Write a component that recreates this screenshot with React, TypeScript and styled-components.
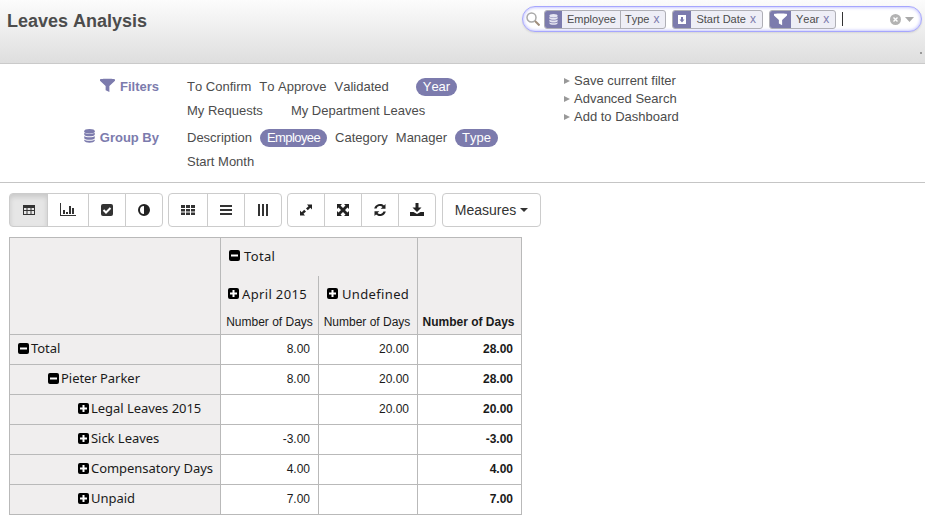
import React from "react";
import styled, { createGlobalStyle } from "styled-components";

const Global = createGlobalStyle`
  html, body { margin: 0; padding: 0; background: #fff; }
  body { font-family: "Liberation Sans", Arial, sans-serif; font-size: 13px; color: #4c4c4c; width: 925px; height: 520px; overflow: hidden; font-kerning: none; }
`;

const Page = styled.div`width: 925px; height: 520px; overflow: hidden;`;

const Header = styled.header`
  height: 64px;
  box-sizing: border-box;
  background: linear-gradient(#fcfcfc, #dedede);
  border-bottom: 1px solid #cacaca;
  display: flex;
  justify-content: space-between;
  padding: 6px 3px 0 7px;
  position: relative;
`;
const Title = styled.h1`
  margin: 3px 0 0;
  font-size: 18px;
  line-height: 24px;
  font-weight: bold;
  color: #4c4c4c;
`;
const SearchBox = styled.div`
  width: 400px;
  height: 26px;
  box-sizing: border-box;
  background: #fff;
  border: 1px solid #a6a6fe;
  border-radius: 13px;
  box-shadow: 0 0 3px 1px rgba(166, 166, 254, .6) inset, 0 1px 2px rgba(0,0,0,.1);
  display: flex;
  align-items: center;
  padding: 0 7px 0 3px;
`;
const SearchIcon = styled.svg`width: 14px; height: 14px; margin-right: 4px; flex: none;`;
const Facet = styled.div`
  height: 19px;
  box-sizing: border-box;
  display: flex;
  align-items: stretch;
  border: 1px solid #afafb6;
  border-radius: 3px;
  margin-right: 6px;
  background: #eeeef6;
  font-size: 11px;
  line-height: 17px;
  color: #4c4c4c;
`;
const FacetIcon = styled.span<{ $w: number }>`
  width: ${p => p.$w}px;
  background: #7c7bad;
  display: flex;
  align-items: center;
  justify-content: center;
  border-radius: 2px 0 0 2px;
`;
const FacetVal = styled.span<{ $div?: boolean }>`
  padding: 0 4px 0 ${p => p.$div ? 4 : 5}px;
  ${p => p.$div ? "border-left: 1px solid #afafb6;" : ""}
`;
const FacetX = styled.span`
  color: #7c7bad;
  margin: 0 6px 0 0;
  font-size: 12px;
`;
const Caret = styled.span`
  width: 1px;
  height: 14px;
  background: #333;
`;
const SearchEnd = styled.div`
  margin-left: auto;
  display: flex;
  align-items: center;
  gap: 4px;
`;
const Grip = styled.span`
  position: absolute;
  right: 3px;
  bottom: 9px;
  width: 2px;
  height: 2px;
  background: #999;
`;

const Drawer = styled.section`
  height: 119px;
  box-sizing: border-box;
  border-bottom: 1px solid #c5c5c5;
  display: flex;
  padding-top: 11px;
`;
const Groups = styled.div`
  width: 564px;
  flex: none;
  display: flex;
  flex-direction: column;
  gap: 3px;
`;
const Group = styled.div`display: flex;`;
const GroupLabel = styled.div`
  width: 159px;
  margin-right: 28px;
  flex: none;
  display: flex;
  justify-content: flex-end;
  align-items: flex-start;
  height: 24px;
  line-height: 24px;
  font-weight: bold;
  color: #7c7bad;
  gap: 5px;
  svg { flex: none; margin-top: 3px; }
`;
const Rows = styled.div`display: flex; flex-direction: column;`;
const Row = styled.div`display: flex; gap: 8px; height: 24px; align-items: center;`;
const Item = styled.span<{ $on?: boolean; $sep?: number; $tight?: boolean }>`
  height: 18px;
  line-height: 18px;
  margin-left: ${p => p.$sep ?? 0}px;
  ${p => p.$on ? "background: #7c7bad; color: #fff; padding: 0 7px; border-radius: 9px;" : ""}
  ${p => p.$tight ? "letter-spacing: -.6px;" : ""}
`;
const Links = styled.ul`
  list-style: none;
  margin: 0;
  padding: 0;
  position: relative;
  top: -3px;
`;
const LinkRow = styled.li`
  height: 18px;
  line-height: 18px;
  display: flex;
  align-items: center;
  gap: 4px;
  &::before {
    content: "";
    width: 0; height: 0;
    border-left: 6px solid #999;
    border-top: 3px solid transparent;
    border-bottom: 3px solid transparent;
  }
`;

const Toolbar = styled.div`
  display: flex;
  gap: 5px;
  padding: 10px 0 0 9px;
`;
const BtnGroup = styled.div`display: flex;`;
const Btn = styled.button<{ $w: number; $active?: boolean }>`
  width: ${p => p.$w}px;
  height: 34px;
  box-sizing: border-box;
  padding: 0;
  margin-left: -1px;
  background: ${p => p.$active ? "#e6e6e6" : "#fff"};
  border: 1px solid #ccc;
  ${p => p.$active ? "box-shadow: inset 0 3px 5px rgba(0,0,0,.125);" : ""}
  display: flex;
  align-items: center;
  justify-content: center;
  color: #333;
  &:first-child { margin-left: 0; border-radius: 4px 0 0 4px; }
  &:last-child { border-radius: 0 4px 4px 0; }
`;
const MeasuresBtn = styled.button`
  width: 99px;
  height: 34px;
  margin-left: 1px;
  box-sizing: border-box;
  padding: 0;
  background: #fff;
  border: 1px solid #ccc;
  border-radius: 4px;
  color: #333;
  font: 14px "Liberation Sans", Arial, sans-serif;
  display: flex;
  align-items: center;
  justify-content: center;
  gap: 4px;
  &::after {
    content: "";
    width: 0; height: 0;
    border-top: 4px solid #333;
    border-left: 4px solid transparent;
    border-right: 4px solid transparent;
  }
`;

const Pivot = styled.table`
  margin: 10px 0 0 9px;
  border-collapse: collapse;
  table-layout: fixed;
  width: 513px;
  font-size: 12px;
  color: #1a1a1a;
  col:nth-child(1) { width: 211px; }
  col:nth-child(2) { width: 98px; }
  col:nth-child(3) { width: 99px; }
  col:nth-child(4) { width: 104px; }
`;
const Th = styled.th<{ $noTop?: boolean; $noBottom?: boolean }>`
  background: #f0eeee;
  border: 1px solid #b9b9b9;
  ${p => p.$noTop ? "border-top: none;" : ""}
  ${p => p.$noBottom ? "border-bottom: none;" : ""}
  font-weight: normal;
  padding: 0;
  text-align: left;
  vertical-align: middle;
`;
const HeadLabel = styled.div<{ $shift: number; $left: number; $gap: number }>`
  display: flex;
  align-items: center;
  gap: ${p => p.$gap}px;
  font: 13px "Noto Sans", "Open Sans", sans-serif;
  letter-spacing: .35px;
  padding-left: ${p => p.$left}px;
  color: #1a1a1a;
  ${p => p.$shift > 0 ? `padding-top: ${p.$shift}px;` : `padding-bottom: ${-p.$shift}px;`}
`;
const Measure = styled.div<{ $bold?: boolean; $nudge?: boolean }>`
  font: ${p => p.$bold ? "bold " : ""}12px "Liberation Sans", Arial, sans-serif;
  text-align: center;
  white-space: nowrap;
  line-height: 24px;
  padding-top: 2px;
  ${p => p.$nudge ? "padding-right: 2px;" : ""}
`;
const RowHead = styled.th<{ $indent: number }>`
  background: #f0eeee;
  border: 1px solid #b9b9b9;
  font: 13px/27px "Noto Sans", "Open Sans", sans-serif;
  letter-spacing: -.04px;
  text-align: left;
  padding: 0 0 2px ${p => p.$indent}px;
  height: 27px;
  color: #1a1a1a;
`;
const RowLabel = styled.div`display: flex; align-items: center; gap: 2px; white-space: nowrap;`;
const Td = styled.td<{ $bold?: boolean }>`
  border: 1px solid #b9b9b9;
  text-align: right;
  padding: 0 8px 0 0;
  height: 29px;
  font-size: 12px;
  font-weight: ${p => p.$bold ? "bold" : "normal"};
  color: #1a1a1a;
`;

const Toggle = ({ minus }: { minus?: boolean }) => (
  <svg width="11" height="11" viewBox="0 0 11 11" style={{ flex: "none" }}>
    <rect width="11" height="11" rx="2" fill="#000" />
    {minus ? <rect x="2" y="4.500" width="7" height="2" fill="#fff" /> : <path d="M4.500 2h2v2.500H9v2H6.500V9h-2V6.500H2v-2h2.500z" fill="#fff" />}
  </svg>
);

const FunnelIcon = ({ c, s }: { c: string; s: number }) => (
  <svg width={s} height={s} viewBox="0 0 16 16"><path d="M0 1.500C0 .5 16 .5 16 1.500V3L10 8.500V15L6 13V8.500L0 3Z" fill={c} /></svg>
);
const DbIcon = ({ c, w, h }: { c: string; w: number; h: number }) => (
  <svg width={w} height={h} viewBox="0 0 12 16">
    <ellipse cx="6" cy="2.500" rx="6" ry="2.500" fill={c} />
    <path d="M0 4c1 2 11 2 12 0v2.500C11 9 1 9 0 6.500ZM0 8c1 2 11 2 12 0v2.500c-1 2.500-11 2.500-12 0ZM0 12c1 2 11 2 12 0v1.500c-1 3-11 3-12 0Z" fill={c} />
  </svg>
);

const I = { width: 14, height: 14, viewBox: "0 0 14 14" };
const TableI = () => <svg {...I}><path fillRule="evenodd" d="M1 2h12v10H1zM2 5v2h2.500V5zm3.500 0v2h3V5zm4 0v2H12V5zM2 8v3h2.500V8zm3.500 0v3h3V8zm4 0v3H12V8z" fill="#333" /></svg>;
const ChartI = () => <svg width="16" height="14" viewBox="0 0 16 14"><path d="M0 0h1v12h15v1H0zM3 7h2v4H3zM6 9h2v2H6zM9 3h2v8H9zM12 5h2v6h-2z" fill="#333" /></svg>;
const CheckI = () => <svg {...I}><rect x="1" y="1" width="12" height="12" rx="2" fill="#333" /><path d="M3.500 7l2.500 2.500L10.500 5" stroke="#fff" strokeWidth="2" fill="none" /></svg>;
const HalfI = () => <svg {...I}><circle cx="7" cy="7" r="5" fill="#fff" stroke="#222" strokeWidth="2" /><path d="M7 2a5 5 0 0 1 0 10z" fill="#222" /></svg>;
const GridI = () => <svg {...I}><path d="M0 2h4v3H0zM5 2h4v3H5zM10 2h4v3h-4zM0 6h4v2.500H0zM5 6h4v2.500H5zM10 6h4v2.500h-4zM0 9.500h4V12H0zM5 9.500h4V12H5zM10 9.500h4V12h-4z" fill="#333" /></svg>;
const LinesI = () => <svg {...I}><path d="M1 2h12v2H1zM1 6h12v2H1zM1 10h12v2H1z" fill="#333" /></svg>;
const ColsI = () => <svg {...I}><path d="M2 1h2v12H2zM6 1h2v12H6zM10 1h2v12h-2z" fill="#333" /></svg>;
const ExpandI = () => <svg {...I}><path d="M8 1.500h5v5L11.300 4.800 8.800 7.300 7 5.500 9.500 3.200zM6 12.500H1v-5L2.700 9.200 5.200 6.700 7 8.500 4.500 10.800z" fill="#222" /></svg>;
const FullI = () => <svg {...I}><path d="M1 1h5L4.500 2.500 7 5l2.500-2.500L8 1h5v5l-1.500-1.500L9 7l2.500 2.500L13 8v5H8l1.500-1.500L7 9l-2.500 2.500L6 13H1V8l1.500 1.500L5 7 2.500 4.500 1 6z" fill="#222" /></svg>;
const RefreshI = () => <svg {...I}><path d="M12.500 1v4.800H7.700l1.800-1.800A3.600 3.600 0 0 0 3.600 5.500H1.200A6 6 0 0 1 11 2.500zM1.500 13V8.200h4.800L4.500 10a3.600 3.600 0 0 0 5.900-1.500h2.400A6 6 0 0 1 3 11.500z" fill="#222" /></svg>;
const DownloadI = () => <svg {...I}><path d="M5.500 0h3v4.500h3L7 9 2.500 4.500h3zM0 9h3.500L7 11l3.500-2H14v4H0z" fill="#222" /></svg>;

type R = { label: string; indent: number; minus?: boolean; a: string; b: string; t: string };
const rows: R[] = [
  { label: "Total", indent: 8, minus: true, a: "8.00", b: "20.00", t: "28.00" },
  { label: "Pieter Parker", indent: 38, minus: true, a: "8.00", b: "20.00", t: "28.00" },
  { label: "Legal Leaves 2015", indent: 68, a: "", b: "20.00", t: "20.00" },
  { label: "Sick Leaves", indent: 68, a: "-3.00", b: "", t: "-3.00" },
  { label: "Compensatory Days", indent: 68, a: "4.00", b: "", t: "4.00" },
  { label: "Unpaid", indent: 68, a: "7.00", b: "", t: "7.00" },
];

export default function App() {
  return (
    <Page>
      <Global />
      <Header>
        <Title>Leaves Analysis</Title>
        <SearchBox>
          <SearchIcon viewBox="0 0 14 14"><circle cx="5.500" cy="5.500" r="4.500" fill="none" stroke="#a9a9a9" strokeWidth="1.500" /><path d="M9 9l4.500 4.500" stroke="#a08e7c" strokeWidth="2" /></SearchIcon>
          <Facet>
            <FacetIcon $w={17}><DbIcon c="#e6e6f2" w={9} h={11} /></FacetIcon>
            <FacetVal>Employee</FacetVal>
            <FacetVal $div>Type</FacetVal>
            <FacetX>x</FacetX>
          </Facet>
          <Facet>
            <FacetIcon $w={18}><svg width="8" height="9" viewBox="0 0 8 9"><rect width="8" height="9" fill="#fff" /><path d="M3 2h2v2.500h1.500L4 7.500 1.500 4.500H3z" fill="#7c7bad" /></svg></FacetIcon>
            <FacetVal>Start Date</FacetVal>
            <FacetX>x</FacetX>
          </Facet>
          <Facet>
            <FacetIcon $w={21}><FunnelIcon c="#fff" s={13} /></FacetIcon>
            <FacetVal>Year</FacetVal>
            <FacetX>x</FacetX>
          </Facet>
          <Caret />
          <SearchEnd>
            <svg width="11" height="11" viewBox="0 0 11 11"><circle cx="5.500" cy="5.500" r="5.500" fill="#b3b3b3" /><path d="M3.500 3.500l4 4M7.500 3.500l-4 4" stroke="#fff" strokeWidth="1.400" /></svg>
            <svg width="9" height="5" viewBox="0 0 9 5"><path d="M0 0h9L4.500 5z" fill="#a9a9a9" /></svg>
          </SearchEnd>
        </SearchBox>
        <Grip />
      </Header>
      <Drawer>
        <Groups>
          <Group>
            <GroupLabel><FunnelIcon c="#7c7bad" s={15} />Filters</GroupLabel>
            <Rows>
              <Row>
                <Item>To Confirm</Item>
                <Item>To Approve</Item>
                <Item>Validated</Item>
                <Item $on $sep={19}>Year</Item>
              </Row>
              <Row>
                <Item>My Requests</Item>
                <Item $sep={20}>My Department Leaves</Item>
              </Row>
            </Rows>
          </Group>
          <Group>
            <GroupLabel><DbIcon c="#7c7bad" w={11} h={14} />Group By</GroupLabel>
            <Rows>
              <Row>
                <Item>Description</Item>
                <Item $on $tight>Employee</Item>
                <Item>Category</Item>
                <Item>Manager</Item>
                <Item $on>Type</Item>
              </Row>
              <Row>
                <Item>Start Month</Item>
              </Row>
            </Rows>
          </Group>
        </Groups>
        <Links>
          <LinkRow>Save current filter</LinkRow>
          <LinkRow>Advanced Search</LinkRow>
          <LinkRow>Add to Dashboard</LinkRow>
        </Links>
      </Drawer>
      <Toolbar>
        <BtnGroup>
          <Btn $w={39} $active><TableI /></Btn>
          <Btn $w={42}><ChartI /></Btn>
          <Btn $w={38}><CheckI /></Btn>
          <Btn $w={38}><HalfI /></Btn>
        </BtnGroup>
        <BtnGroup>
          <Btn $w={40}><GridI /></Btn>
          <Btn $w={38}><LinesI /></Btn>
          <Btn $w={38}><ColsI /></Btn>
        </BtnGroup>
        <BtnGroup>
          <Btn $w={38}><ExpandI /></Btn>
          <Btn $w={38}><FullI /></Btn>
          <Btn $w={38}><RefreshI /></Btn>
          <Btn $w={38}><DownloadI /></Btn>
        </BtnGroup>
        <MeasuresBtn>Measures</MeasuresBtn>
      </Toolbar>
      <Pivot>
        <colgroup><col /><col /><col /><col /></colgroup>
        <thead>
          <tr style={{ height: 38 }}>
            <Th rowSpan={3} />
            <Th colSpan={2} $noBottom><HeadLabel $shift={-2} $left={8} $gap={4}><Toggle minus />Total</HeadLabel></Th>
            <Th rowSpan={2} $noBottom />
          </tr>
          <tr style={{ height: 32 }}>
            <Th $noTop $noBottom><HeadLabel $shift={4} $left={7} $gap={3}><Toggle />April 2015</HeadLabel></Th>
            <Th $noTop $noBottom><HeadLabel $shift={4} $left={8} $gap={4}><Toggle />Undefined</HeadLabel></Th>
          </tr>
          <tr style={{ height: 26 }}>
            <Th $noTop><Measure>Number of Days</Measure></Th>
            <Th $noTop><Measure $nudge>Number of Days</Measure></Th>
            <Th $noTop><Measure $bold $nudge>Number of Days</Measure></Th>
          </tr>
        </thead>
        <tbody>
          {rows.map(r => (
            <tr key={r.label + r.indent}>
              <RowHead $indent={r.indent}><RowLabel><Toggle minus={r.minus} />{r.label}</RowLabel></RowHead>
              <Td>{r.a}</Td>
              <Td>{r.b}</Td>
              <Td $bold>{r.t}</Td>
            </tr>
          ))}
        </tbody>
      </Pivot>
    </Page>
  );
}
